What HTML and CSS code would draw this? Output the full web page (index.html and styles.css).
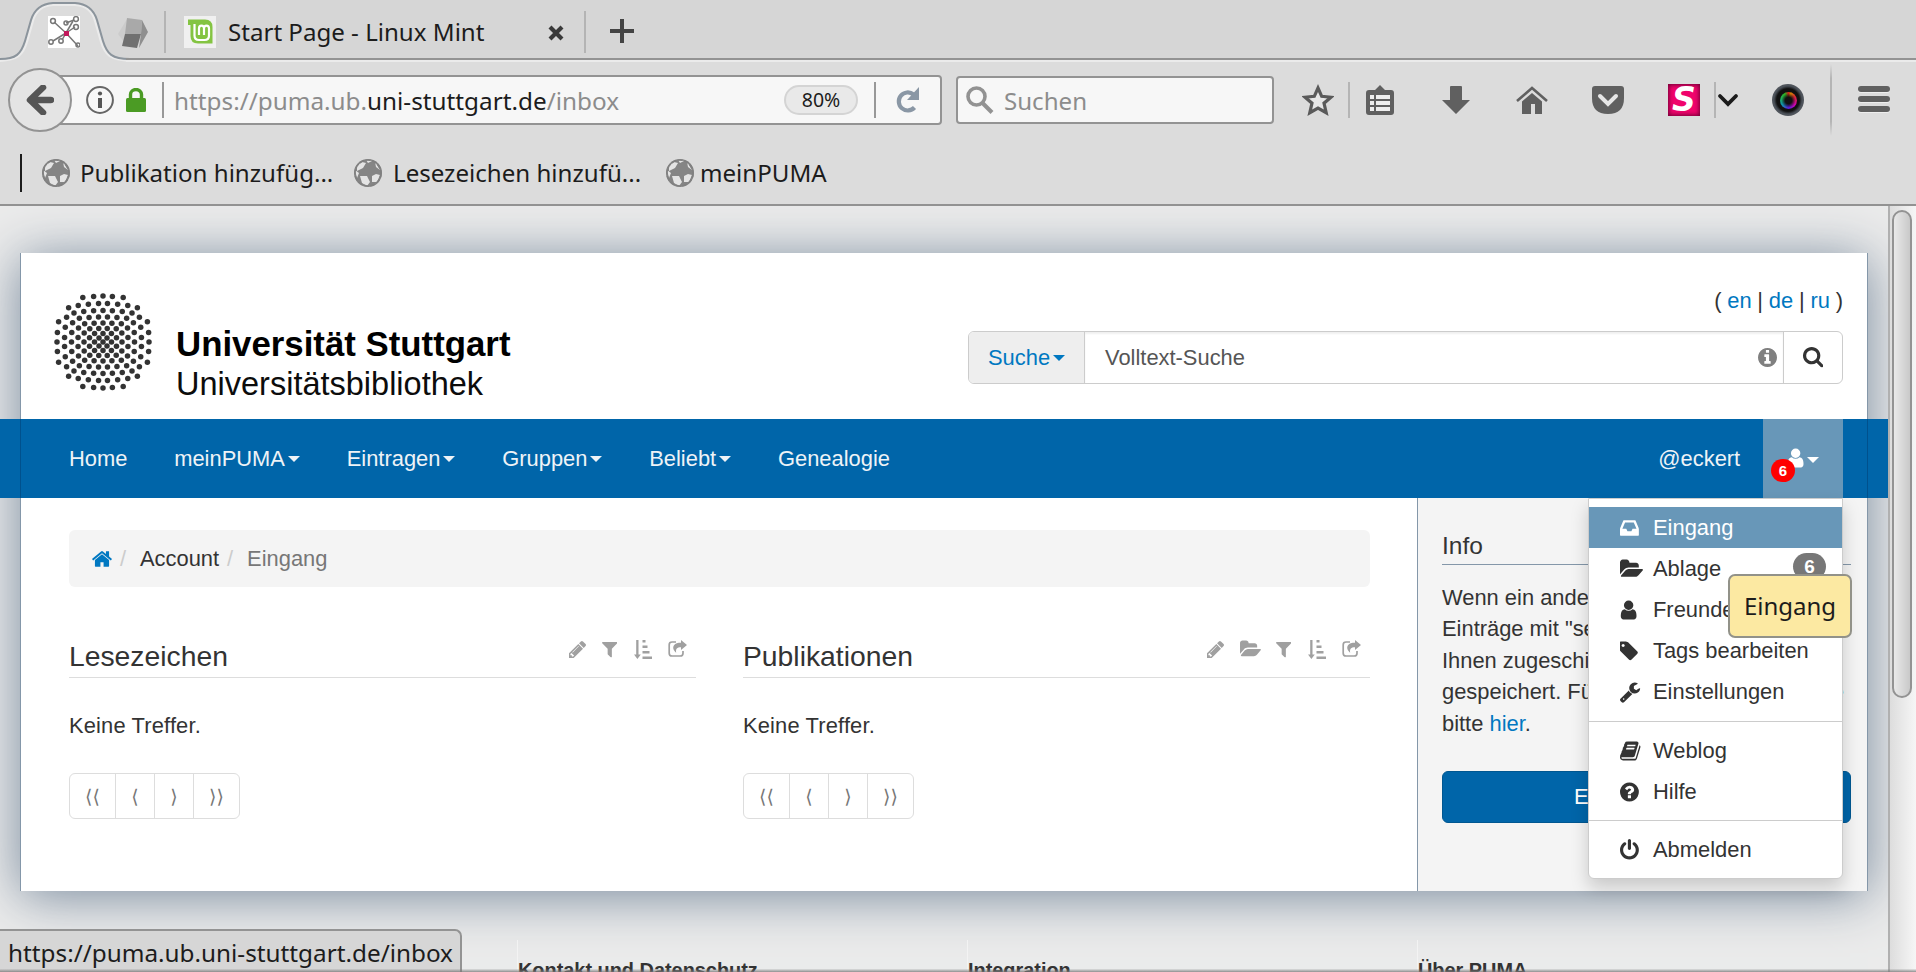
FILE: index.html
```html
<!DOCTYPE html>
<html lang="de">
<head>
<meta charset="utf-8">
<title>PUMA | Eingang</title>
<link rel="stylesheet" href="styles.css">
</head>
<body>
<svg class="defs" width="0" height="0">
  <symbol id="i-search" viewBox="64 128 1664 1664"><path d="M1216 832q0-185-131.500-316.500t-316.500-131.500-316.500 131.500-131.500 316.500 131.500 316.500 316.500 131.500 316.500-131.500 131.500-316.500zm512 832q0 52-38 90t-90 38q-54 0-90-38l-343-342q-179 124-399 124-143 0-273.500-55.500t-225-150-150-225-55.500-273.500 55.500-273.500 150-225 225-150 273.500-55.500 273.500 55.500 225 150 150 225 55.500 273.500q0 220-124 399l343 343q37 37 37 90z"/></symbol>
  <symbol id="i-info" viewBox="128 128 1536 1536"><path d="M1152 1376v-160q0-14-9-23t-23-9h-96v-512q0-14-9-23t-23-9h-320q-14 0-23 9t-9 23v160q0 14 9 23t23 9h96v320h-96q-14 0-23 9t-9 23v160q0 14 9 23t23 9h448q14 0 23-9t9-23zm-128-896v-160q0-14-9-23t-23-9h-192q-14 0-23 9t-9 23v160q0 14 9 23t23 9h192q14 0 23-9t9-23zm640 416q0 209-103 385.500t-279.500 279.500-385.500 103-385.500-103-279.500-279.500-103-385.500 103-385.500 279.500-279.500 385.500-103 385.500 103 279.500 279.500 103 385.500z"/></symbol>
  <symbol id="i-help" viewBox="128 0 1792 1792"><path d="M1024 1376v-192q0-14-9-23t-23-9h-192q-14 0-23 9t-9 23v192q0 14 9 23t23 9h192q14 0 23-9t9-23zm256-672q0-88-55.500-163t-138.500-116-170-41q-243 0-371 213-15 24 8 42l132 100q7 6 19 6 16 0 25-12 53-68 86-92 34-24 86-24 48 0 85.500 26t37.500 59q0 38-20 61t-68 45q-63 28-115.500 86.500t-52.500 125.500v36q0 14 9 23t23 9h192q14 0 23-9t9-23q0-19 21.500-49.500t54.500-49.500q32-18 49-28.500t46-35 44.500-48 28-60.500 12.500-81zm384 192q0 209-103 385.500t-279.500 279.500-385.500 103-385.500-103-279.500-279.500-103-385.500 103-385.500 279.500-279.500 385.500-103 385.500 103 279.500 279.500 103 385.500z"/></symbol>
  <symbol id="i-user" viewBox="192 0 1792 1792"><path d="M1536 1399q0 109-62.500 187t-150.500 78h-854q-88 0-150.500-78t-62.500-187q0-85 8.500-160.500t31.500-152 58.500-131 94-89 134.500-34.500q131 128 313 128t313-128q76 0 134.500 34.500t94 89 58.500 131 31.500 152 8.500 160.500zm-256-887q0 159-112.500 271.500t-271.500 112.500-271.500-112.500-112.500-271.500 112.500-271.500 271.500-112.500 271.500 112.500 112.500 271.500z"/></symbol>
  <symbol id="i-tag" viewBox="192 0 1792 1792"><path d="M576 448q0-53-37.500-90.500t-90.500-37.500-90.500 37.500-37.500 90.500 37.500 90.500 90.500 37.500 90.500-37.500 37.500-90.500zm1067 576q0 53-37 90l-491 492q-39 37-91 37-53 0-90-37l-715-716q-38-37-64.500-101t-26.500-117v-416q0-52 38-90t90-38h416q53 0 117 26.500t102 64.500l715 714q37 39 37 91z"/></symbol>
  <symbol id="i-power" viewBox="128 0 1792 1792"><path d="M1664 896q0 156-61 298t-164 245-245 164-298 61-298-61-245-164-164-245-61-298q0-182 80.500-343t226.500-270q43-32 95.500-25t83.500 50q32 42 24.500 94.500t-49.500 84.500q-98 74-151.500 181t-53.500 228q0 104 40.500 198.500t109.500 163.500 163.500 109.500 198.500 40.500 198.500-40.500 163.500-109.500 109.500-163.500 40.500-198.500q0-121-53.500-228t-151.500-181q-42-32-49.500-84.500t24.500-94.500q31-43 84-50t95 25q146 109 226.500 270t80.500 343zm-640-768v640q0 52-38 90t-90 38-90-38-38-90v-640q0-52 38-90t90-38 90 38 38 90z"/></symbol>
  <symbol id="i-folder" viewBox="0 0 1879 1792"><path d="M1879 952q0 31-31 66l-336 396q-43 51-120.500 86.500t-143.500 35.500h-1088q-34 0-60.500-13t-26.500-43q0-31 31-66l336-396q43-51 120.500-86.500t143.500-35.500h1088q34 0 60.500 13t26.500 43zm-343-344v160h-832q-94 0-197 47.500t-164 119.500l-337 396-5 6q0-4-.5-12.500t-.5-12.500v-960q0-92 66-158t158-66h320q92 0 158 66t66 158v32h544q92 0 158 66t66 158z"/></symbol>
  <symbol id="i-home" viewBox="90 0 1612 1792"><path d="M1472 992v480q0 26-19 45t-45 19h-384v-384h-256v384h-384q-26 0-45-19t-19-45v-480q0-1 .5-3t.5-3l575-474 575 474q1 2 1 6zm223-69l-62 74q-8 9-21 11h-3q-13 0-21-7l-692-577-692 577q-12 8-24 7-13-2-21-11l-62-74q-8-10-7-23.500t11-21.500l719-599q32-26 76-26t76 26l244 204v-195q0-14 9-23t23-9h192q14 0 23 9t9 23v408l219 182q10 8 11 21.500t-7 23.500z"/></symbol>
  <symbol id="i-pencil" viewBox="128 149 1515 1515"><path d="M491 1536l91-91-235-235-91 91v107h128v128h107zm523-928q0-22-22-22-10 0-17 7l-542 542q-7 7-7 17 0 22 22 22 10 0 17-7l542-542q7-7 7-17zm-54-192l416 416-832 832h-416v-416zm683 96q0 53-37 90l-166 166-416-416 166-165q36-38 90-38 53 0 91 38l235 234q37 39 37 91z"/></symbol>
  <symbol id="i-filter" viewBox="191 256 1410 1408"><path d="M1595 295q17 41-14 70l-493 493v742q0 42-39 59-13 5-25 5-27 0-45-19l-256-256q-19-19-19-45v-486l-493-493q-31-29-14-70 17-39 59-39h1280q42 0 59 39z"/></symbol>
  <symbol id="i-inbox" viewBox="128 0 1792 1792"><path d="M1151 960h316q-1-3-2.500-8t-2.500-8l-212-496h-708l-212 496q-1 2-2.500 8t-2.500 8h316l95 192h320zm513 30v482q0 26-19 45t-45 19h-1408q-26 0-45-19t-19-45v-482q0-62 25-123l238-552q10-25 36.500-42t52.500-17h832q26 0 52.500 17t36.500 42l238 552q25 61 25 123z"/></symbol>
  <symbol id="i-wrench" viewBox="85 0 1792 1792"><path d="M448 1472q0-26-19-45t-45-19-45 19-19 45 19 45 45 19 45-19 19-45zm644-420l-682 682q-37 37-90 37-52 0-91-37l-106-108q-38-36-38-90 0-53 38-91l681-681q39 98 114.500 173.500t173.500 114.500zm634-435q0 39-23 106-47 134-164.500 217.500t-258.500 83.500q-185 0-316.500-131.500t-131.500-316.500 131.500-316.500 316.500-131.500q58 0 121.500 16.500t107.500 46.500q16 11 16 28t-16 28l-293 169v224l193 107q5-3 79-48.500t135.500-81 70.500-35.500q15 0 23.500 10t8.500 25z"/></symbol>
  <symbol id="i-book" viewBox="64 0 1792 1792"><path d="M1703 478q40 57 18 129l-275 906q-19 64-76.500 107.500t-122.500 43.500h-923q-77 0-148.500-53.500t-99.500-131.500q-24-67-2-127 0-4 3-27t4-37q1-8-3-21.500t-3-19.500q2-11 8-21t16.500-23.500 16.500-23.500q23-38 45-91.500t30-91.500q3-10 .5-30t-.5-28q3-11 17-28t17-23q21-36 42-92t25-90q1-9-2.500-32t.5-28q4-13 22-30.500t22-22.500q19-26 42.500-84.500t27.500-96.500q1-8-3-25.500t-2-26.500q2-8 9-18t18-23 17-21q8-12 16.500-30.500t15-35 16-36 19.500-32 26.500-23.500 36-11.500 47.500 5.500l-1 3q38-9 51-9h761q74 0 114 56t18 130l-274 906q-36 119-71.500 153.500t-128.500 34.500h-869q-27 0-38 15-11 16-1 43 24 70 144 70h923q29 0 56-15.500t35-41.500l300-987q7-22 5-57 38 15 59 43zm-1064 2q-4 13 2 22.500t20 9.500h608q13 0 25.500-9.500t16.500-22.500l21-64q4-13-2-22.500t-20-9.500h-608q-13 0-25.500 9.500t-16.500 22.500zm-83 256q-4 13 2 22.500t20 9.500h608q13 0 25.500-9.500t16.500-22.500l21-64q4-13-2-22.500t-20-9.500h-608q-13 0-25.500 9.500t-16.500 22.500z"/></symbol>
  <symbol id="i-sort" viewBox="0 0 18 19"><path d="M2.200 0h2.300v14.500h2.300L3.400 19 0 14.500h2.200zM8.500 0h3v2.500h-3zM8.500 5.500h5V8h-5zM8.500 11h7v2.500h-7zM8.500 16.500H18V19H8.500z"/></symbol>
  <symbol id="i-share" viewBox="0 0 19 17"><path d="M8 2H4Q1.200 2 1.200 4.800v8.400Q1.200 16 4 16h8.200q2.800 0 2.800-2.800V11" fill="none" stroke="currentColor" stroke-width="1.700"/><path d="M13 0l6 5-6 5V7.200C9 7.200 7.500 8.800 8.200 12.800 5.800 10.500 4.200 8 6 5.200 7.300 3.200 9.800 2.800 13 2.800z"/></symbol>
  <symbol id="i-globe" viewBox="0 0 28 28"><circle cx="14" cy="14" r="14" fill="#858585"/><path d="M3 7l5-4 4 1-3 5-6 3zM1 11l4 3-2 5zM6 17l7 0 3 6-3 4-5-3zM18 17l4-2 4 1-3 7-5 0zM21 3l5 8-4-3zM12 1l6 1-4 2z" fill="#e4e4e4"/><circle cx="14" cy="14" r="13" fill="none" stroke="#808080" stroke-width="1.600" stroke-dasharray="5 1.500"/></symbol>
</svg>

<div class="browser">
  <div class="tabstrip">
    <svg class="tab-shape" viewBox="0 0 130 64" width="130" height="64">
      <path d="M0 60C16 59 21 54 25 41L31 20Q36 4 53 3H75Q92 4 97 20L103 41C107 54 112 59 128 60V64H0z" fill="#dcdcdc"/>
      <path d="M0 61C18 60 23 55 27 42L33 21Q37 6 53 5H75Q91 6 95 21L101 42C105 55 110 60 130 61" fill="none" stroke="#ebebeb" stroke-width="2"/>
      <path d="M0 59C16 59 21 54 25 41L31 20Q36 4 53 3H75Q92 4 97 20L103 41C107 54 112 59 130 59" fill="none" stroke="#8b949c" stroke-width="2"/>
    </svg>
    <svg class="fav-net" viewBox="0 0 32 32" width="32" height="32"><rect width="32" height="32" fill="#fff"/><g fill="none" stroke="#777" stroke-width="1.500"><path d="M18 17L6 6M18 17l7-12M18 17L30 30M18 17L5 25M18 17l-4 7"/><circle cx="5" cy="5" r="2.400"/><circle cx="28" cy="3" r="2.400"/><circle cx="18" cy="7" r="2"/><circle cx="28" cy="11" r="2.400"/><circle cx="3" cy="26" r="2.200"/><circle cx="13" cy="25" r="2.200"/><circle cx="30" cy="29" r="2"/><path d="M18 7l8-3M18 17l9-6"/></g><rect x="16" y="15" width="5" height="5" fill="#c2185b"/></svg>
    <svg class="fav-cube" viewBox="0 0 30 30" width="30" height="30"><path d="M0 16L9 1v27z" fill="#ccc"/><path d="M9 0l15 2-1 14-16 0z" fill="#a9a9a9"/><path d="M7 16h16l-4 14-15-2z" fill="#707070"/><path d="M24 2l6 12-9 16 2-14z" fill="#8f8f8f"/></svg>
    <i class="tab-sep s1"></i>
    <svg class="fav-mint" viewBox="0 0 32 32" width="32" height="32"><rect width="32" height="32" fill="#f0f0f0"/><path d="M4 3.500h17q7.500 0 7.500 7.500v16.500H14q-7.500 0-7.500-7.500V9H4z" fill="#84c442"/><path d="M10.500 8v11.500q0 4.500 4.500 4.500h5.500q4.500 0 4.500-4.500V12.500q0-2.800-2.500-2.800T20 12.500v6.500M20 12.500q0-2.800-2.500-2.800T15 12.500v6.500" fill="none" stroke="#fff" stroke-width="2.200"/></svg>
    <span class="tab-title">Start Page - Linux Mint</span>
    <svg class="tab-close" viewBox="0 0 16 16" width="16" height="16"><path d="M2 2l12 12M14 2L2 14" stroke="#3a3a3a" stroke-width="4.200"/></svg>
    <i class="tab-sep s2"></i>
    <svg class="tab-plus" viewBox="0 0 24 24" width="24" height="24"><path d="M12 0v24M0 12h24" stroke="#444" stroke-width="4"/></svg>
  </div>

  <div class="toolbar">
    <div class="back"><svg viewBox="0 0 28 30" width="28" height="30"><path d="M17 2.500L4 15l13 12.500M5 15h20" fill="none" stroke="#555" stroke-width="6.500" stroke-linejoin="round" stroke-linecap="round"/></svg></div>
    <div class="urlbar">
      <svg viewBox="0 0 28 28" width="28" height="28"><circle cx="14" cy="14" r="12.900" fill="none" stroke="#666" stroke-width="2"/><circle cx="14" cy="7.500" r="2.100" fill="#555"/><path d="M14 12v10" stroke="#555" stroke-width="4"/></svg>
      <svg class="lock" viewBox="0 0 20 24" width="20" height="24"><path d="M4.500 11V6.500a5.500 5 0 0 1 11 0V11" fill="none" stroke="#4b9b24" stroke-width="3.400"/><rect y="10" width="20" height="14" rx="1.500" fill="#4b9b24"/></svg>
      <i class="bar-sep"></i>
      <span class="url">https://puma.ub.<b>uni-stuttgart.de</b>/inbox</span>
      <span class="zoom">80%</span>
      <i class="bar-sep"></i>
      <svg class="reload" viewBox="0 0 24 24" width="24" height="28"><path d="M18.500 19.500A9 9 0 1 1 17.500 6.500" fill="none" stroke="#8a97a5" stroke-width="4.200"/><path d="M23 -1v13H11z" fill="#8a97a5"/></svg>
    </div>
    <div class="searchbar">
      <svg viewBox="0 0 28 28" width="28" height="28"><circle cx="10.500" cy="10.500" r="8.500" fill="none" stroke="#929292" stroke-width="3.600"/><path d="M16.500 17L26 26.500" stroke="#929292" stroke-width="4"/></svg>
      <span>Suchen</span>
    </div>
    <div class="tools">
      <svg width="32" height="32" viewBox="0 0 32 32"><path d="M16 4l3.700 8.300 9.300.9-7 6 2.200 9.500L16 24l-8.200 4.700L10 19.200l-7-6 9.300-.9z" fill="#e6e6e6" stroke="#5a5a5a" stroke-width="3.200"/></svg>
      <i class="tool-sep p1"></i>
      <svg class="t2" width="28" height="30" viewBox="0 0 28 30"><path d="M3 5h6l5-5 5 5h6q3 0 3 3v19q0 3-3 3H3q-3 0-3-3V8q0-3 3-3z" fill="#606060"/><path d="M10 10h14v4H10zM10 16h14v4H10zM10 22h14v4H10zM4 10h4v4H4zM4 16h4v4H4zM4 22h4v4H4z" fill="#eee"/></svg>
      <svg class="t3" width="28" height="28" viewBox="0 0 28 28"><path d="M9 0h10q1 0 1 1v13h8L14 28 0 14h8V1q0-1 1-1z" fill="#606060"/></svg>
      <svg class="t4" width="32" height="28" viewBox="0 0 32 28"><path d="M1 15L16 2l15 13" fill="none" stroke="#606060" stroke-width="2.600"/><path d="M6 15.500l10-8.500 10 8.500V28h-7V18h-4v10H6z" fill="#606060"/></svg>
      <svg class="t5" width="32" height="28" viewBox="0 0 32 28"><path d="M3 0h26q3 0 3 3v9q0 16-16 16T0 12V3q0-3 3-3z" fill="#606060"/><path d="M8 10l8 8 8-8" fill="none" stroke="#e6e6e6" stroke-width="4" stroke-linecap="round"/></svg>
      <span class="stylish">S</span>
      <i class="tool-sep p2"></i>
      <svg class="t7" width="22" height="14" viewBox="0 0 22 14"><path d="M3 3l8 8 8-8" fill="none" stroke="#1b1b1b" stroke-width="3.800" stroke-linecap="round"/></svg>
      <span class="lens"><i></i></span>
      <i class="fade-sep"></i>
      <span class="burger"><i></i><i></i><i></i></span>
    </div>
  </div>

  <div class="bookmarks">
    <i class="grip"></i>
    <svg class="g1"><use href="#i-globe"/></svg><span class="b1">Publikation hinzufüg...</span>
    <svg class="g2"><use href="#i-globe"/></svg><span class="b2">Lesezeichen hinzufü...</span>
    <svg class="g3"><use href="#i-globe"/></svg><span class="b3">meinPUMA</span>
  </div>
</div>

<div class="viewport">
  <main class="page">
    <div class="sheet">
      <header>
        <div class="logo">
          <svg id="seal" viewBox="-50 -50 100 100" width="100" height="100"></svg>
          <div class="logo-text"><strong>Universität Stuttgart</strong><span>Universitätsbibliothek</span></div>
        </div>
        <div class="head-right">
          <div class="lang">( <a>en</a> | <a>de</a> | <a>ru</a> )</div>
          <div class="search">
            <span class="scope">Suche<i class="caret"></i></span>
            <span class="field">Volltext-Suche<svg><use href="#i-info"/></svg></span>
            <span class="go"><svg><use href="#i-search"/></svg></span>
          </div>
        </div>
      </header>
      <div class="nav-space"></div>
      <div class="columns">
        <section class="content">
          <div class="crumbs"><svg><use href="#i-home"/></svg><i class="c1">/</i><span>Account</span><i class="c2">/</i><em>Eingang</em></div>
          <div class="lists">
            <div class="list">
              <div class="list-head"><h3>Lesezeichen</h3><div class="acts"><svg class="pencil"><use href="#i-pencil"/></svg><svg class="filter"><use href="#i-filter"/></svg><svg class="sort"><use href="#i-sort"/></svg><svg class="share"><use href="#i-share"/></svg></div></div>
              <p>Keine Treffer.</p>
              <div class="pager"><span>⟨⟨</span><span>⟨</span><span>⟩</span><span>⟩⟩</span></div>
            </div>
            <div class="list">
              <div class="list-head"><h3>Publikationen</h3><div class="acts"><svg class="pencil"><use href="#i-pencil"/></svg><svg class="folder"><use href="#i-folder"/></svg><svg class="filter"><use href="#i-filter"/></svg><svg class="sort"><use href="#i-sort"/></svg><svg class="share"><use href="#i-share"/></svg></div></div>
              <p>Keine Treffer.</p>
              <div class="pager"><span>⟨⟨</span><span>⟨</span><span>⟩</span><span>⟩⟩</span></div>
            </div>
          </div>
        </section>
        <aside>
          <h4>Info</h4>
          <div class="info"><div>Wenn ein ande</div><div>Einträge mit "se</div><div>Ihnen zugeschi</div><div class="split"><span>gespeichert. Fü</span><a>e</a></div><div>bitte <a>hier</a>.</div></div>
          <div class="btn">E</div>
        </aside>
      </div>
    </div>

    <nav>
      <span>Home</span><span>meinPUMA<i class="caret"></i></span><span>Eintragen<i class="caret"></i></span><span>Gruppen<i class="caret"></i></span><span>Beliebt<i class="caret"></i></span><span>Genealogie</span>
      <span class="me">@eckert</span>
      <span class="account"><svg><use href="#i-user"/></svg><i class="caret"></i><b>6</b></span>
    </nav>

    <footer><div class="f0"></div><div>Kontakt und Datenschutz</div><div>Integration</div><div>Über PUMA</div></footer>

    <div class="menu">
      <div class="item on"><svg><use href="#i-inbox"/></svg>Eingang</div>
      <div class="item"><svg class="wide"><use href="#i-folder"/></svg>Ablage<b>6</b></div>
      <div class="item"><svg class="person"><use href="#i-user"/></svg>Freunde</div>
      <div class="item"><svg><use href="#i-tag"/></svg>Tags bearbeiten</div>
      <div class="item"><svg><use href="#i-wrench"/></svg>Einstellungen</div>
      <hr>
      <div class="item"><svg><use href="#i-book"/></svg>Weblog</div>
      <div class="item"><svg><use href="#i-help"/></svg>Hilfe</div>
      <hr>
      <div class="item"><svg><use href="#i-power"/></svg>Abmelden</div>
    </div>
    <div class="tip">Eingang</div>
  </main>
  <div class="scroll"><div class="thumb"></div></div>
  <div class="status">https://puma.ub.uni-stuttgart.de/inbox</div>
  <div class="edge"></div>
</div>
<script src="seal.js"></script>
</body>
</html>
```

FILE: styles.css
```css
* { box-sizing: border-box; }
body { margin: 0; width: 1916px; height: 972px; overflow: hidden; background: #dcdcdc; color: #1c1c1c; font-family: "Noto Sans", sans-serif; font-size: 24.100px; }
i, em { font-style: normal; }
svg { display: block; fill: currentColor; flex: none; }
.defs { position: absolute; }

/* browser chrome */
.browser { height: 206px; border-bottom: 2px solid #929292; }
.tabstrip { position: relative; height: 62px; background: #d6d6d6; display: flex; align-items: flex-start; }
.tabstrip::after { content: ""; position: absolute; left: 126px; right: 0; bottom: 0; height: 4px; background: linear-gradient(#939393 50%, #ebebeb 50%); }
.tab-shape { position: absolute; left: 0; top: 0; }
.fav-net { position: relative; margin: 16px 0 0 48px; }
.fav-cube { margin: 18px 0 0 38px; }
.tab-sep { width: 2px; height: 42px; margin-top: 11px; background: #b4b4b4; flex: none; }
.s1 { margin-left: 16px; }
.fav-mint { margin: 16px 0 0 18px; }
.tab-title { width: 332px; padding-left: 12px; line-height: 33px; margin-top: 15px; white-space: nowrap; }
.tab-close { margin-top: 25px; }
.s2 { margin-left: 20px; }
.tab-plus { margin: 19px 0 0 24px; }

.toolbar { height: 76px; display: flex; align-items: center; padding-left: 8px; }
.back { width: 64px; height: 64px; border: 2px solid #939393; border-radius: 50%; background: #e4e4e4; display: flex; align-items: center; justify-content: center; z-index: 1; flex: none; }
.urlbar { width: 892px; height: 50px; margin-left: -22px; border: 2px solid #939393; border-radius: 4px; background: #f7f7f7; display: flex; align-items: center; padding-left: 34px; flex: none; }
.lock { margin-left: 12px; }
.bar-sep { width: 2px; height: 36px; background: #989898; flex: none; }
.lock + .bar-sep { margin-left: 16px; }
.url { width: 620px; padding-left: 10px; color: #8c8c8c; line-height: 38px; padding-top: 1px; white-space: nowrap; font-size: 24.300px; }
.url b { font-weight: normal; color: #1c1c1c; }
.zoom { width: 74px; height: 30px; border: 2px solid #d4d4d4; border-radius: 15px; background: #e9e9e9; font-size: 19.500px; line-height: 26px; text-align: center; flex: none; }
.zoom + .bar-sep { margin-left: 16px; }
.reload { margin-left: 20px; overflow: visible; }
.searchbar { width: 318px; height: 48px; margin-left: 14px; border: 2px solid #939393; border-radius: 4px; background: #f7f7f7; display: flex; align-items: center; padding-left: 8px; gap: 10px; color: #8c8c8c; line-height: 36px; flex: none; }
.searchbar span { padding-top: 2px; }
.tools { display: flex; align-items: center; margin-left: 28px; }
.tools > * { flex: none; }
.tool-sep { width: 2px; height: 36px; background: #b5b5b5; }
.p1 { margin-left: 14px; }
.t2 { margin-left: 16px; }
.t3 { margin-left: 48px; }
.t4 { margin-left: 46px; }
.t5 { margin-left: 44px; }
.stylish { width: 32px; height: 32px; margin-left: 44px; background: #f0046c; box-shadow: inset 0 0 4px 1px #6d0034; color: #fff; font: italic bold 33px/32px "DejaVu Sans", sans-serif; text-align: center; }
.p2 { margin-left: 14px; }
.t7 { margin-left: 1px; }
.lens { width: 32px; height: 32px; margin-left: 33px; border-radius: 50%; background: radial-gradient(#111 50%, #4a5058 62%, #777); display: flex; align-items: center; justify-content: center; }
.lens i { width: 17px; height: 17px; border-radius: 50%; background: radial-gradient(#111 28%, transparent 60%), conic-gradient(#e22, #e90 5%, #f33 15%, #e0c 35%, #62f 50%, #1ac 65%, #2c6 80%, #3c2 92%, #e22); opacity: .85; }
.fade-sep { width: 2px; height: 72px; margin-left: 26px; background: linear-gradient(transparent, #b5b5b5 20%, #b5b5b5 80%, transparent); }
.burger { width: 32px; margin-left: 26px; display: flex; flex-direction: column; gap: 4px; margin-top: -2px; }
.burger i { height: 6px; border-radius: 3px; background: #606060; box-shadow: 0 1px 0 #eee; }

.bookmarks { height: 66px; display: flex; align-items: center; padding: 4px 0 0 20px; line-height: 36px; white-space: nowrap; }
.bookmarks svg { width: 28px; height: 28px; }
.grip { width: 2px; height: 38px; background: #1c1c1c; }
.g1 { margin-left: 20px; }
.b1 { width: 274px; margin-left: 10px; }
.b2 { width: 273px; margin-left: 11px; }
.b3 { margin-left: 6px; }

/* web page */
.viewport { position: relative; height: 766px; display: flex; overflow: hidden; }
.page { position: relative; width: 1888px; height: 766px; overflow: hidden; background: #ebebeb; font-family: "Liberation Sans", Arial, sans-serif; font-size: 21.900px; color: #333; flex: none; }
a { color: #0078c1; }
.caret { display: inline-block; border: 6px solid transparent; border-top-color: currentColor; border-bottom: 0; margin-left: 3px; vertical-align: 4px; }
.sheet { width: 1848px; height: 638px; margin: 47px 0 0 20px; background: #fff; border: solid #8497a9; border-width: 0 1px; box-shadow: 0 5px 50px #788a9d; }
header { height: 166px; display: flex; justify-content: space-between; padding: 0 24px 0 32px; }
.logo { display: flex; padding-top: 39px; }
.logo-text { color: #0c0c0c; padding: 31px 0 0 23px; white-space: nowrap; }
.logo-text strong { display: block; font-size: 34.800px; line-height: 41px; color: #000; }
.logo-text span { display: block; font-size: 32.500px; line-height: 41px; }
.head-right { width: 875px; }
.lang { height: 78px; padding-top: 32px; line-height: 31px; text-align: right; word-spacing: -.3px; }
.search { height: 53px; display: flex; border: 1px solid #ccc; border-radius: 6px; line-height: 51px; overflow: hidden; }
.scope { width: 116px; background: #eee; border-right: 1px solid #ccc; color: #0078c1; padding-left: 19px; }
.field { flex: 1; display: flex; justify-content: space-between; align-items: center; padding: 0 6px 0 20px; color: #555; box-shadow: inset 0 2px 2px #f0f0f0; }
.field svg { width: 19px; height: 19px; color: #808080; }
.go { width: 59px; border-left: 1px solid #ccc; display: flex; align-items: center; justify-content: center; }
.go svg { width: 20.500px; height: 20.500px; }
.nav-space { height: 79px; }
nav { position: absolute; left: 0; top: 213px; width: 1888px; height: 79px; padding: 0 45px; background: linear-gradient(90deg, transparent 20px, #00518d 20px, #00518d 21px, transparent 21px, transparent 1867px, #00518d 1867px, #00518d 1868px, transparent 1868px) #0065a9; color: #eef3f7; display: flex; line-height: 79px; white-space: nowrap; }
nav > span { padding: 0 22.800px 0 24px; }
nav .me { margin-left: auto; }
.account { position: relative; width: 80px; background: #6897b8; color: #fff; display: flex; align-items: center; }
nav > .account { padding: 0 0 0 25px; }
.account svg { width: 22px; height: 22px; margin: -1px 0 0 -1px; }
.account .caret { margin-left: -2px; margin-top: 3px; }
.account b { position: absolute; left: 8px; top: 40px; width: 24px; height: 23px; border-radius: 12px; background: #f00; font-size: 15px; line-height: 23px; text-align: center; }

.columns { display: flex; height: 393px; }
.content { width: 1396px; padding: 32px 0 0 48px; }
.crumbs { width: 1301px; height: 57px; border-radius: 6px; background: #f4f4f4; display: flex; align-items: center; padding-left: 23px; line-height: 57px; }
.crumbs svg { width: 20px; height: 22px; color: #0078c1; }
.crumbs i { color: #ccc; }
.c1 { width: 20px; margin-left: 8px; }
.c2 { width: 20px; margin-left: 8px; }
.crumbs em { color: #777; }
.lists { display: flex; gap: 47px; margin-top: 50px; }
.list { width: 627px; }
.list-head { height: 41px; display: flex; justify-content: space-between; border-bottom: 1px solid #ddd; }
h3 { margin: 3px 0 0; font-size: 28.300px; font-weight: normal; line-height: 32px; }
.acts { display: flex; padding: 3px 9px 0 0; color: #a0a0a0; }
.pencil { width: 17px; height: 17px; margin-top: 1px; margin-right: 16px; }
.folder { width: 21px; height: 20px; margin-top: -1px; margin-right: 15px; }
.filter { width: 15.500px; height: 15.500px; margin-top: 2px; margin-right: 17px; }
.sort { width: 18px; height: 19px; margin-right: 16px; }
.share { width: 19px; height: 17px; }
.list p { margin: 32px 0 0; line-height: 31px; letter-spacing: .15px; }
.pager { display: inline-flex; height: 46px; margin-top: 32px; border: 1px solid #ddd; border-radius: 6px; font: 19px/44px "DejaVu Sans", sans-serif; color: #777; }
.pager span { width: 39px; text-align: center; border-left: 1px solid #ddd; }
.pager span:first-child { width: 45px; border-left: 0; }
.pager span:last-child { width: 46px; }
aside { flex: 1; background: #f4f4f4; border-left: 1px solid #8497a9; padding: 34px 16px 0 24px; }
h4 { margin: 0; height: 33px; font-size: 24.500px; font-weight: normal; line-height: 27px; border-bottom: 1px solid #8497a9; }
.info { margin-top: 17px; line-height: 31.400px; white-space: nowrap; }
.split { display: flex; justify-content: space-between; padding-right: 7px; }
.btn { height: 52px; margin-top: 32px; border: 1px solid #005791; border-radius: 6px; background: #0065a9; color: #fff; line-height: 50px; padding-left: 131px; }

footer { display: flex; margin-top: 49px; padding-left: 20px; font-size: 19.900px; font-weight: bold; line-height: 24px; }
footer div { width: 450px; height: 60px; padding-top: 18px; border-left: 1px solid #f3f3f3; }
footer .f0 { width: 497px; border-left: 0; }

.menu { position: absolute; left: 1588px; top: 292px; width: 255px; height: 381px; padding: 8px 0; border: 1px solid #ccc; border-radius: 0 0 6px 6px; background: #fff; box-shadow: 0 9px 18px rgba(0,0,0,.175); }
.item { height: 41px; display: flex; align-items: center; padding-left: 31px; line-height: 41px; }
.item svg { width: 22px; height: 22px; margin-right: 11px; }
.item .wide { width: 23px; margin-right: 10px; }
.item.on { background: #6897b8; color: #fff; }
.item b { margin: -4px 16px 0 auto; width: 33px; height: 27px; border-radius: 14px; background: #777; color: #fff; font-size: 19px; line-height: 27px; text-align: center; }
hr { margin: 9px 0 8px; border: 0; height: 1px; background: #ccc; }
hr + .item + .item + hr { margin-top: 8px; }
.tip { position: absolute; left: 1728px; top: 368px; width: 124px; height: 64px; border: 2px solid #929289; border-radius: 7px; background: #fce9a2; font: 24px/60px "Noto Sans", sans-serif; color: #1c1c1c; text-align: center; }

.scroll { width: 28px; border-left: 2px solid #b0b0b0; background: linear-gradient(90deg, #ddd, #f6f6f6); padding: 4px 0 0 2px; }
.thumb { width: 20px; height: 488px; border: 2px solid #939393; border-radius: 10px; background: linear-gradient(90deg, #e9e9e9, #c9c9c9); }
.status { position: absolute; left: 0; bottom: 0; width: 462px; height: 43px; padding-left: 8px; border: solid #939393; border-width: 2px 2px 0 0; border-radius: 0 7px 0 0; background: #d6d6d6; font-size: 24.300px; line-height: 43px; white-space: nowrap; }
.edge { position: absolute; left: 0; right: 0; bottom: 0; height: 3px; background: linear-gradient(rgba(120,120,120,.1), rgba(120,120,120,.8)); }
```

FILE: seal.js
```javascript
// Draws the round dot seal: a diagonal lattice that bulges towards the rim.
const seal = document.getElementById('seal');
for (let j = -8; j <= 8; j++) {
  for (let i = -8; i <= 8; i++) {
    const a = Math.abs(i), b = Math.abs(j);
    if ((a + b) % 2 || a + b > 14 || (a === 8 && b > 4) || (b === 8 && a > 4)) continue;
    const low = Math.min(a, b) / 8;
    const pull = 1 - 0.14 * low * low;
    const step = (p, q) => (3.75 + 0.25 * p + 0.12 * Math.min(4, Math.max(0, q - p))) * pull;
    const dot = document.createElementNS('http://www.w3.org/2000/svg', 'circle');
    dot.setAttribute('cx', i * step(a, b));
    dot.setAttribute('cy', j * step(b, a));
    dot.setAttribute('r', 2.75);
    seal.appendChild(dot);
  }
}
```
